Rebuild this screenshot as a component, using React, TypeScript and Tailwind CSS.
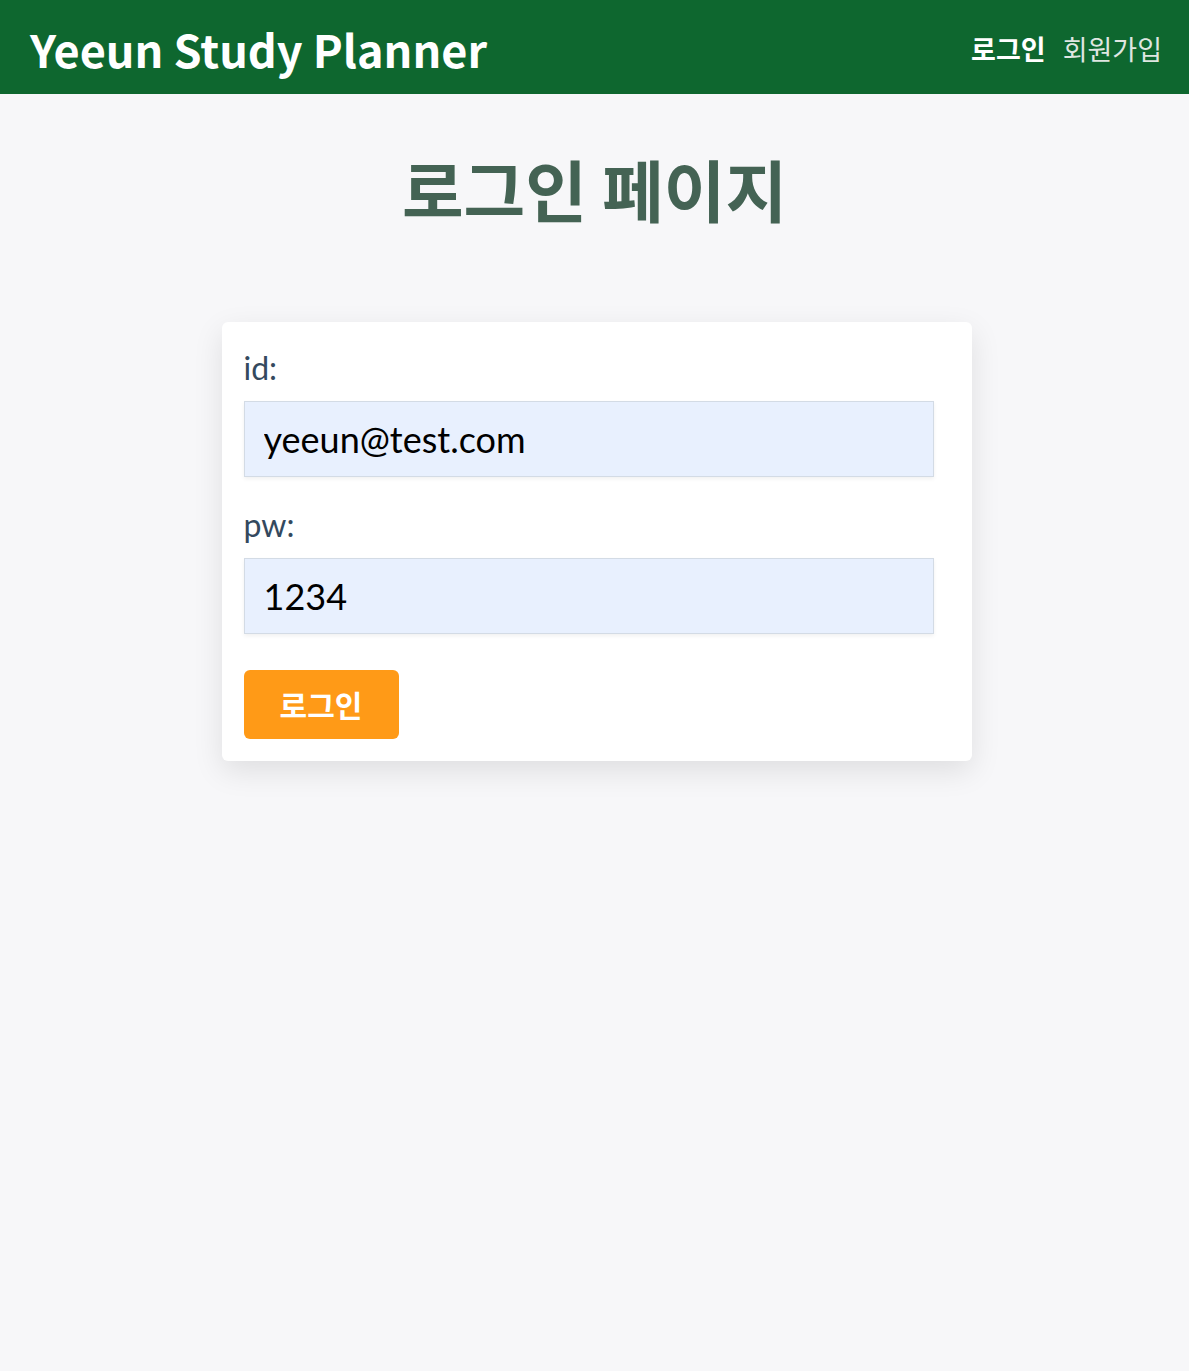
import React from "react";

const cjk = "font-['Noto_Sans_CJK_KR','Noto_Sans',sans-serif]";
const lato = "font-['Lato','Noto_Sans_CJK_KR',sans-serif]";

const Header: React.FC = () => (
  <header className={`bg-[#0e672f] h-[94px] flex items-center justify-between pl-[30px] pr-[27px] ${cjk}`}>
    <h1 className="text-white text-[45px] font-bold leading-none pt-[2px]">Yeeun Study Planner</h1>
    <nav className="flex items-center gap-[17px] text-[27px] pt-[4px]">
      <a className="text-white font-bold">로그인</a>
      <a className="text-[#dfe6e1]">회원가입</a>
    </nav>
  </header>
);

const Field: React.FC<{ label: string; value: string }> = ({ label, value }) => (
  <div>
    <label className={`block text-[32px] leading-[48px] mb-[9px] text-[#34495e] ${lato}`}>{label}</label>
    <input
      type="text"
      defaultValue={value}
      className={`block w-[690px] h-[76px] px-[19px] bg-[#e8f0fe] border border-[#d3dbe5] text-[36px] text-black shadow-[0_2px_4px_rgba(0,0,0,0.06)] outline-none ${lato}`}
    />
  </div>
);

export default function App() {
  return (
    <div className="min-h-[1371px] bg-[#f7f7f9]">
      <Header />
      <main className="flex flex-col items-center">
        <h2 className={`mt-[44px] text-[67px] font-bold text-[#446354] leading-[1.5] ${cjk}`}>로그인 페이지</h2>
        <div className="mt-[83px] ml-[4px] w-[750px] bg-white rounded-[6px] p-[22px] shadow-[0_10px_30px_rgba(0,0,0,0.1)]">
          <Field label="id:" value="yeeun@test.com" />
          <div className="mt-[24px]">
            <Field label="pw:" value="1234" />
          </div>
          <button className={`mt-[36px] w-[155px] h-[69px] rounded-[6px] bg-[#ff9a17] text-white text-[30px] font-bold ${cjk}`}>
            로그인
          </button>
        </div>
      </main>
    </div>
  );
}
